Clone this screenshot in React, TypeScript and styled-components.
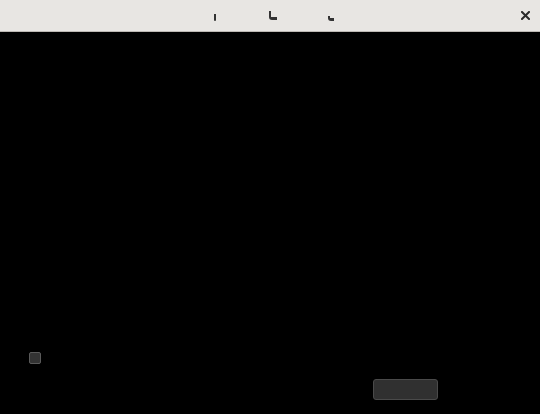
import React from "react";
import styled, { createGlobalStyle } from "styled-components";

const Global = createGlobalStyle`
  html, body { margin: 0; padding: 0; background: #000; }
  body { font-family: "Liberation Sans", Arial, sans-serif; }
  #root { width: 540px; height: 414px; }
`;

const Window = styled.div`
  width: 540px;
  height: 414px;
  display: flex;
  flex-direction: column;
  background: #000;
  overflow: hidden;
`;

const TitleBar = styled.div`
  height: 31px;
  flex: 0 0 31px;
  display: flex;
  align-items: flex-start;
  background: #e8e6e3;
  border-bottom: 1px solid #bdb9b4;
  box-sizing: content-box;
`;

const TitleGlyphs = styled.div`
  display: flex;
  align-items: flex-start;
  padding-left: 214px;
  height: 31px;
`;

const Glyph = styled.span<{ $w: number; $h: number; $top: number; $left: number; $solid?: boolean }>`
  display: block;
  box-sizing: border-box;
  width: ${(p) => p.$w}px;
  height: ${(p) => p.$h}px;
  margin-top: ${(p) => p.$top}px;
  margin-left: ${(p) => p.$left}px;
  background: ${(p) => (p.$solid ? "#333" : "transparent")};
  border-left: ${(p) => (p.$solid ? "none" : "2px solid #333")};
  border-bottom: ${(p) => (p.$solid ? "none" : "3px solid #333")};
  border-radius: ${(p) => (p.$solid ? "0 0 1px 1px" : "0 0 0 3px")};
`;

const CloseButton = styled.button`
  margin-left: auto;
  margin-right: 2px;
  width: 26px;
  height: 30px;
  padding: 0;
  border: none;
  background: transparent;
  display: flex;
  align-items: center;
  justify-content: center;
  cursor: pointer;
`;

const Body = styled.div`
  flex: 1;
  display: flex;
  flex-direction: column;
  justify-content: flex-end;
  padding: 0 102px 14px 29px;
  background: #000;
`;

const Check = styled.span`
  display: block;
  box-sizing: border-box;
  width: 12px;
  height: 12px;
  border: 1px solid #5a5a5a;
  border-radius: 2px;
  background: #333;
`;

const ButtonRow = styled.div`
  display: flex;
  justify-content: flex-end;
  margin-top: 15px;
`;

const ActionButton = styled.button`
  box-sizing: border-box;
  width: 65px;
  height: 21px;
  border: 1px solid #4a4a4a;
  border-radius: 3px;
  background: #303030;
  padding: 0;
`;

export default function App() {
  return (
    <>
      <Global />
      <Window>
        <TitleBar>
          <TitleGlyphs>
            <Glyph $solid $w={2} $h={7} $top={14} $left={0} />
            <Glyph $w={8} $h={9} $top={11} $left={53} />
            <Glyph $w={6} $h={5} $top={16} $left={51} />
          </TitleGlyphs>
          <CloseButton aria-label="Close">
            <svg width="9" height="9" viewBox="0 0 9 9">
              <path d="M1 1 L8 8 M8 1 L1 8" stroke="#2a2a2a" strokeWidth="2" strokeLinecap="square" />
            </svg>
          </CloseButton>
        </TitleBar>
        <Body>
          <Check />
          <ButtonRow>
            <ActionButton />
          </ButtonRow>
        </Body>
      </Window>
    </>
  );
}
